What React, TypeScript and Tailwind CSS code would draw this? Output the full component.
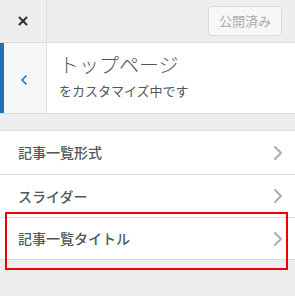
import React from 'react';
import { X, ChevronLeft, ChevronRight } from 'lucide-react';

const sections = ['記事一覧形式', 'スライダー', '記事一覧タイトル'];

const App: React.FC = () => {
    return (
        <div
            className="relative w-[295px] h-[296px] bg-[#eeeeee] overflow-hidden"
            style={{ fontFamily: '"Noto Sans CJK JP", "Noto Sans", sans-serif' }}
        >
            <div className="flex h-[43px] border-b border-[#dddddd]">
                <div className="w-[47px] flex items-center justify-center border-r border-[#dddddd]">
                    <X size={14} strokeWidth={3.5} className="text-[#333]" />
                </div>
                <div className="flex-1 flex items-center justify-end pr-[13px]">
                    <button className="h-[30px] w-[74px] mt-[-1px] rounded-[3px] border border-[#dcdcde] bg-[#f7f7f7] text-[13px] text-[#a7aaad]">
                        公開済み
                    </button>
                </div>
            </div>

            <div className="flex h-[71px] bg-white border-b border-[#dddddd]">
                <div className="w-[47px] flex items-center justify-center border-l-[4px] border-l-[#2271b1] border-r border-[#dddddd] bg-[#f5f6f6]">
                    <ChevronLeft size={16} strokeWidth={2.5} className="text-[#2271b1] ml-[-2px] mt-[3px]" />
                </div>
                <div className="flex-1 pl-[12px] pt-[7px] text-[#50575e]">
                    <div className="text-[20px] font-light leading-[30px]">トップページ</div>
                    <div className="text-[13px] leading-[18px] mt-[2px]">をカスタマイズ中です</div>
                </div>
            </div>

            <div className="mt-[16px] bg-white border-t border-[#dddddd]">
                {sections.map((s, i) => (
                    <div
                        key={i}
                        className={`flex items-center justify-between h-[43px] pl-[18px] pr-[5px] ${
                            i > 0 ? 'border-t border-[#dddddd]' : ''
                        } ${i === sections.length - 1 ? 'border-b' : ''}`}
                    >
                        <span className="text-[14px] font-medium text-[#50575e]">{s}</span>
                        <ChevronRight size={24} strokeWidth={1.8} className="text-[#a7aaad]" />
                    </div>
                ))}
            </div>

            <div className="absolute left-[5px] top-[212px] w-[283px] h-[58px] border-2 border-[#ee0000]" />
        </div>
    );
};

export default App;
